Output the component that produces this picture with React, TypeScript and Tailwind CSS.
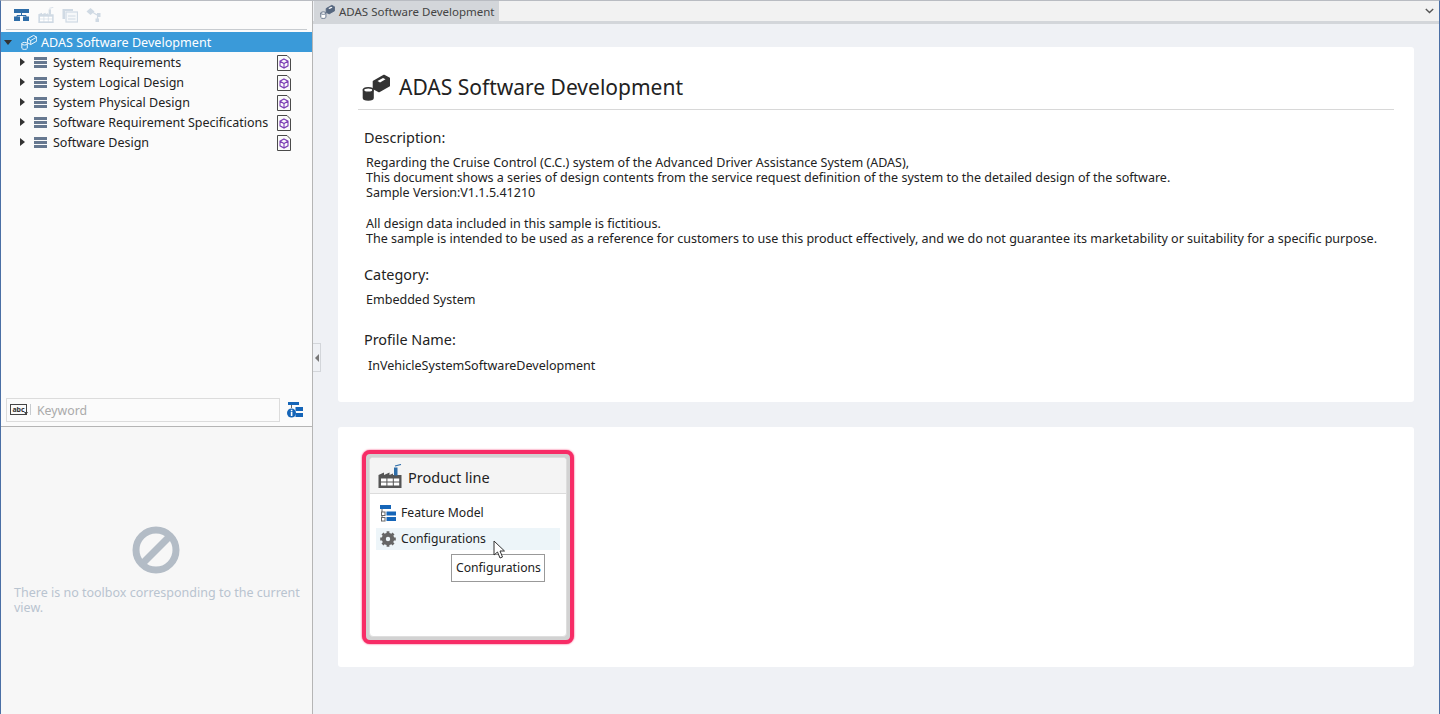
import { ReactNode } from "react";

const font = { fontFamily: '"Noto Sans", "Liberation Sans", sans-serif' };

const treeItems = [
  "System Requirements",
  "System Logical Design",
  "System Physical Design",
  "Software Requirement Specifications",
  "Software Design",
];

function ProjectIcon({ size = 16, variant = "tab" }: { size?: number; variant?: "tab" | "title" | "selected" }) {
  const line = variant === "selected" ? "#ffffff" : variant === "title" ? "#333333" : "#56677f";
  const box = variant === "selected" ? "#3a9ad9" : line;
  const drum = variant === "selected" ? "#3a9ad9" : variant === "title" ? "#333333" : "#ffffff";
  return (
    <svg width={size} height={size} viewBox="0 0 28 28">
      <path d="M11.5 8.5 L22 2.5 L27.5 5.5 V12.5 L17 18.5 L11.5 15.5 Z" fill={box} stroke={line} strokeWidth="1.6" strokeLinejoin="round" />
      {variant === "selected" ? (
        <path d="M11.5 8.5 L17 11.5 L27.5 5.5 M17 11.5 V18.5" fill="none" stroke="#ffffff" strokeWidth="1.5" />
      ) : (
        <path d="M15.5 8 L21 5 L23.5 6.3 L18 9.4 Z" fill="#ffffff" />
      )}
      <path d="M1.5 17 V25 C1.5 27.6 11 27.6 11 25 V17 Z" fill={drum} stroke={line} strokeWidth="1.6" />
      <ellipse cx="6.25" cy="17" rx="4.75" ry="2.3" fill={variant === "title" ? "#ffffff" : drum} stroke={line} strokeWidth="1.6" />
    </svg>
  );
}

function DiagramIcon() {
  return (
    <svg width="15" height="12" viewBox="0 0 15 12">
      <rect x="0" y="0" width="15" height="4" fill="#2e6da8" />
      <path d="M7.5 4 V6.5 M3 8 V6.5 H12 V8" fill="none" stroke="#2e6da8" strokeWidth="1" />
      <rect x="0" y="7.5" width="6" height="4.5" fill="#2e6da8" />
      <rect x="9" y="7.5" width="6" height="4.5" fill="#2e6da8" />
    </svg>
  );
}

function FactoryIcon({ size = 16, color = "#d0dae4", chimney = "#d0dae4" }: { size?: number; color?: string; chimney?: string }) {
  return (
    <svg width={size} height={size} viewBox="0 0 24 24">
      <path d="M0.5 24 V11 L6 8.5 V11 L11.5 8.5 V11 L15 9.5 V11 H23.5 V24 Z" fill={color} />
      <rect x="16" y="3.5" width="3.5" height="8" fill={chimney} />
      <path d="M17 2 L23 0.5" stroke={chimney} strokeWidth="1.2" />
      <g fill="#ffffff">
        <rect x="3" y="14.5" width="5.4" height="3" />
        <rect x="9.4" y="14.5" width="5.4" height="3" />
        <rect x="15.8" y="14.5" width="5.4" height="3" />
        <rect x="3" y="18.5" width="5.4" height="3" />
        <rect x="9.4" y="18.5" width="5.4" height="3" />
        <rect x="15.8" y="18.5" width="5.4" height="3" />
      </g>
    </svg>
  );
}

function PagesIcon() {
  return (
    <svg width="16" height="16" viewBox="0 0 16 16">
      <path d="M0.5 2 H11 V4 H3 V12 H0.5 Z" fill="#d0dae4" />
      <rect x="4" y="5" width="11.5" height="10" fill="#f6f8fa" stroke="#d0dae4" strokeWidth="1.2" />
      <path d="M6 9 H13.5 M6 12 H13.5" stroke="#d0dae4" strokeWidth="1.2" />
    </svg>
  );
}

function LinkIcon() {
  return (
    <svg width="16" height="16" viewBox="0 0 16 16">
      <path d="M4.5 1 L8.5 4.5 L4.5 8 L0.5 4.5 Z" fill="#d0dae4" />
      <path d="M11 6 H14.5 V10 H11 Z M9.5 11.5 H13 V15 H9.5 Z" fill="#d0dae4" />
      <path d="M7 5.5 L11 8 M11.5 10 L11.5 12" stroke="#d0dae4" strokeWidth="1.2" />
    </svg>
  );
}

function PackageFileIcon() {
  return (
    <svg width="14" height="16" viewBox="0 0 14 16">
      <path d="M0.5 0.5 H10 L13.5 4 V15.5 H0.5 Z" fill="#fbfbfb" stroke="#4a4a4a" />
      <path d="M7 4 L11 6.2 V10.8 L7 13 L3 10.8 V6.2 Z M3 6.2 L7 8.5 L11 6.2 M7 8.5 V13" fill="none" stroke="#7d3fb5" strokeWidth="1.1" />
    </svg>
  );
}

function Gear() {
  return (
    <svg width="16" height="16" viewBox="0 0 16 16">
      <circle cx="8" cy="8" r="4.2" fill="none" stroke="#666666" strokeWidth="4" />
      <path
        d="M8 0.2 V3 M8 13 V15.8 M0.2 8 H3 M13 8 H15.8 M2.5 2.5 L4.4 4.4 M11.6 11.6 L13.5 13.5 M13.5 2.5 L11.6 4.4 M4.4 11.6 L2.5 13.5"
        stroke="#666666"
        strokeWidth="2.8"
      />
    </svg>
  );
}

function FeatureIcon() {
  return (
    <svg width="16" height="17" viewBox="0 0 16 17">
      <rect x="0" y="0" width="11" height="4" fill="#1565b8" />
      <path d="M2 4 V14 H4 M2 9 H4" fill="none" stroke="#666666" />
      <rect x="1.5" y="7" width="3.5" height="3.5" fill="#ffffff" stroke="#666666" />
      <rect x="1.5" y="12.5" width="3.5" height="3.5" fill="#ffffff" stroke="#666666" />
      <rect x="6.5" y="6.5" width="9.5" height="4" fill="#1565b8" />
      <rect x="6.5" y="12" width="9.5" height="4" fill="#1565b8" />
    </svg>
  );
}

function InfoTreeIcon() {
  return (
    <svg width="16" height="16" viewBox="0 0 16 16">
      <rect x="1" y="0" width="11" height="3" fill="#1565b8" />
      <path d="M4.5 3 V6" stroke="#666666" />
      <rect x="8.5" y="5" width="7.5" height="4" fill="#1565b8" />
      <rect x="8.5" y="11" width="7.5" height="4" fill="#1565b8" />
      <circle cx="4.5" cy="11" r="4.5" fill="#1565b8" />
      <rect x="3.8" y="7.8" width="1.6" height="1.5" fill="#ffffff" />
      <rect x="3.8" y="10" width="1.6" height="4" fill="#ffffff" />
    </svg>
  );
}

function Heading({ children, className }: { children: ReactNode; className: string }) {
  return <div className={`text-[14.4px] leading-5 text-[#222] ${className}`}>{children}</div>;
}

export default function App() {
  return (
    <div className="flex h-[714px] w-[1440px] overflow-hidden border-x border-t border-x-[#4a6fa5] border-t-[#b9bcc2] bg-[#eff1f5]" style={font}>
      {/* left side */}
      <div className="flex w-[312px] shrink-0 flex-col border-r border-[#b5b5b5] bg-[#fbfbfb]">
        <div className="mx-[5px] flex h-[29px] shrink-0 items-center gap-[8px] border-b border-[#c8ccd0] pl-[8px]">
          <span className="mr-[1px] flex">
            <DiagramIcon />
          </span>
          <FactoryIcon />
          <PagesIcon />
          <LinkIcon />
        </div>
        <div className="mt-[2px] flex h-[20px] shrink-0 items-center bg-[#3a9ad9] text-[12.6px] text-white">
          <span className="ml-[3px] h-0 w-0 border-x-[4px] border-t-[5px] border-x-transparent border-t-[#333]" />
          <span className="ml-[9px] flex">
            <ProjectIcon size={16} variant="selected" />
          </span>
          <span className="ml-[4px] pt-[2px]">ADAS Software Development</span>
        </div>
        <div className="flex-1">
          {treeItems.map((item) => (
            <div key={item} className="relative flex h-[20px] items-center text-[12.5px] text-[#222]">
              <span className="ml-[19px] h-0 w-0 border-y-[4px] border-l-[5px] border-y-transparent border-l-[#333]" />
              <span className="ml-[9px] flex h-[11px] w-[13px] flex-col justify-between">
                <span className="h-[3px] bg-[#667890]" />
                <span className="h-[3px] bg-[#667890]" />
                <span className="h-[3px] bg-[#667890]" />
              </span>
              <span className="ml-[6px] whitespace-nowrap pt-[2px]">{item}</span>
              <span className="absolute left-[276px] top-[3px] flex">
                <PackageFileIcon />
              </span>
            </div>
          ))}
        </div>
        <div className="flex h-[30px] shrink-0 items-center border-b border-[#b5b5b5] pb-[4px] pl-[5px]">
          <div className="flex h-[24px] w-[274px] items-center border border-[#dcdcdc]">
            <span className="relative flex w-[24px] justify-center border-r border-[#c8ccd0]">
              <span className="border border-[#444] px-[1px] text-[7px] font-bold leading-[9px] text-[#333]">abc</span>
              <span className="absolute bottom-0 right-[2px] h-0 w-0 border-x-[2px] border-t-[3px] border-x-transparent border-t-[#444]" />
            </span>
            <span className="ml-[6px] pt-[3px] text-[12.3px] text-[#aaa]">Keyword</span>
          </div>
          <span className="ml-[7px] flex">
            <InfoTreeIcon />
          </span>
        </div>
        <div className="flex h-[287px] shrink-0 flex-col bg-[#f7f7f7] pl-[13px] pt-[99px]">
          <svg className="ml-[118px]" width="48" height="48" viewBox="0 0 48 48">
            <circle cx="24" cy="24" r="20" fill="none" stroke="#b3bcc6" strokeWidth="7" />
            <path d="M10 38 L38 10" stroke="#b3bcc6" strokeWidth="7" />
          </svg>
          <div className="mt-[11px] w-[292px] text-[12.5px] leading-[15px] text-[#b9c4d0]">
            There is no toolbox corresponding to the current view.
          </div>
        </div>
      </div>

      {/* right side */}
      <div className="relative flex min-w-0 flex-1 flex-col">
        <div className="ml-[1px] flex h-[20px] shrink-0 items-center bg-[#f2f2f2]">
          <div className="flex h-full w-[185px] items-center bg-[#d3d6da] pl-[6px] text-[11.5px] text-[#444]">
            <ProjectIcon size={15} />
            <span className="ml-[4px] whitespace-nowrap pt-[1px]">ADAS Software Development</span>
          </div>
          <div className="flex-1" />
          <svg className="mr-[5px]" width="9" height="6" viewBox="0 0 9 6">
            <path d="M0.8 1 L4.5 4.5 L8.2 1" fill="none" stroke="#555" strokeWidth="1.4" />
          </svg>
        </div>
        <div className="h-[3px] shrink-0 bg-[#d3d6da]" />

        <div className="ml-[25px] mr-[25px] mt-[23px] flex h-[355px] flex-col rounded-[3px] bg-white pl-[20px] pr-[20px]">
          <div className="flex h-[63px] items-end border-b border-[#d8d8d8] pb-[7px]">
            <span className="ml-[4px] flex pb-[1px]">
              <ProjectIcon size={28} variant="title" />
            </span>
            <span className="ml-[9px] text-[21px] leading-[30px] text-[#222]">ADAS Software Development</span>
          </div>
          <Heading className="ml-[6px] mt-[18px]">Description:</Heading>
          <div className="ml-[8px] mt-[7px] whitespace-nowrap text-[12.54px] leading-[15px] text-[#222]">
            <div>Regarding the Cruise Control (C.C.) system of the Advanced Driver Assistance System (ADAS),</div>
            <div>This document shows a series of design contents from the service request definition of the system to the detailed design of the software.</div>
            <div>Sample Version:V1.1.5.41210</div>
            <div className="h-[16px]" />
            <div>All design data included in this sample is fictitious.</div>
            <div>The sample is intended to be used as a reference for customers to use this product effectively, and we do not guarantee its marketability or suitability for a specific purpose.</div>
          </div>
          <Heading className="ml-[6px] mt-[19px]">Category:</Heading>
          <div className="ml-[8px] mt-[7px] text-[12.54px] leading-[15px] text-[#222]">Embedded System</div>
          <Heading className="ml-[6px] mt-[23px]">Profile Name:</Heading>
          <div className="ml-[10px] mt-[8px] text-[12.54px] leading-[15px] text-[#222]">InVehicleSystemSoftwareDevelopment</div>
        </div>

        <div className="ml-[25px] mr-[25px] mt-[25px] h-[240px] rounded-[3px] bg-white pl-[24px] pt-[23px]">
          <div className="h-[194px] w-[212px] rounded-[8px] border-[4px] border-[#f72c66] bg-[#d2d2d2] p-[3px] shadow-[0_0_2px_#f72c66]">
            <div className="flex h-full flex-col overflow-hidden rounded-[4px] border border-[#dedede] bg-white">
              <div className="flex h-[36px] shrink-0 items-center border-b border-[#dcdcdc] bg-[#f4f4f4] pl-[8px]">
                <FactoryIcon size={24} color="#555555" chimney="#2e6da8" />
                <span className="ml-[6px] pt-[4px] text-[14.5px] text-[#222]">Product line</span>
              </div>
              <div className="px-[6px] pt-[8px] text-[12.2px] text-[#222]">
                <div className="flex h-[22px] items-center pl-[4px]">
                  <FeatureIcon />
                  <span className="ml-[5px]">Feature Model</span>
                </div>
                <div className="mt-[4px] flex h-[22px] items-center bg-[#edf5f9] pl-[4px]">
                  <Gear />
                  <span className="ml-[5px]">Configurations</span>
                </div>
              </div>
            </div>
          </div>
        </div>

        {/* splitter handle, tooltip and pointer float over the page */}
        <div className="absolute left-0 top-[342px] flex h-[29px] w-[8px] items-center justify-center border border-l-0 border-[#d3d6da] bg-[#eff1f5]">
          <span className="h-0 w-0 border-y-[4px] border-r-[4px] border-y-transparent border-r-[#777]" />
        </div>
        <div className="absolute left-[138px] top-[553px] whitespace-nowrap border border-[#999] bg-white py-[4px] pl-[4px] pr-[3px] text-[12.2px] leading-[18px] text-[#222]">
          Configurations
        </div>
        <svg className="absolute left-[180px] top-[539px]" width="14" height="20" viewBox="0 0 14 20">
          <path d="M1 1 V15 L4.5 12 L7 18 L9.5 17 L7 11 H11.5 Z" fill="#ffffff" stroke="#333" strokeWidth="1" />
        </svg>
      </div>
    </div>
  );
}
